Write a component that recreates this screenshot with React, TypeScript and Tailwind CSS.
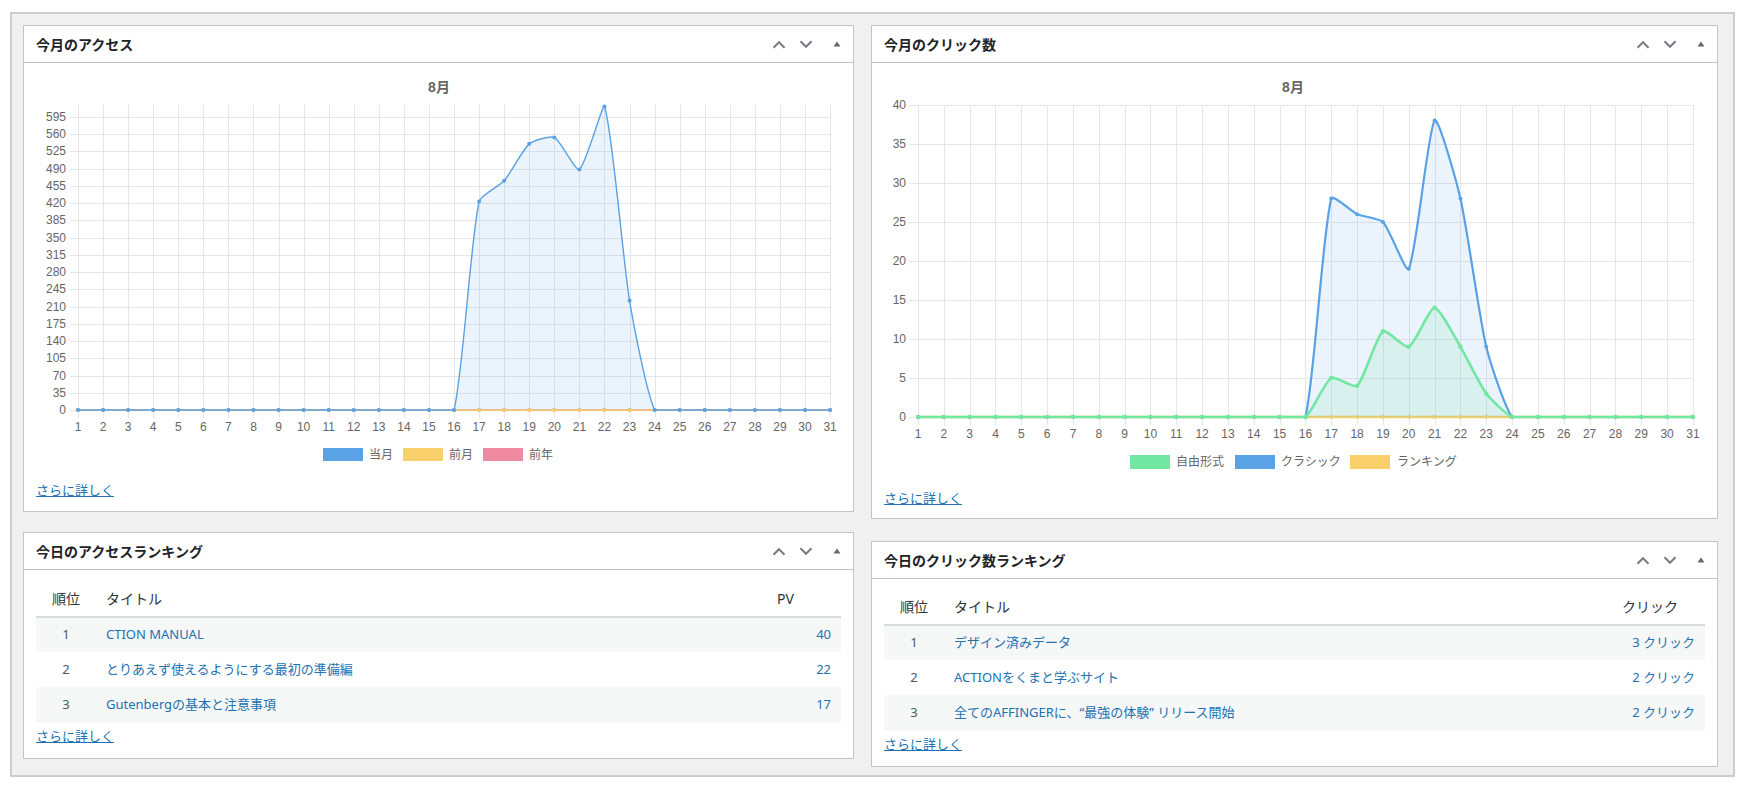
import React from 'react';

type Pt = { x: number; y: number };

type DataSet = {
  data: number[];
  color: string;
  fill?: string;
  width: number;
  r: number;
};

type ChartCfg = {
  vb: [number, number, number, number];
  titleX: number;
  titleY: number;
  x0: number;
  dx: number;
  y0: number;
  k: number;
  top: number;
  yTicks: number[];
  yLabelX: number;
  gridLeft: number;
  gridRight: number;
  gridBottom: number;
  xLabelY: number;
  sets: DataSet[]; // bottom first
  legend: { x: number; tx: number; label: string; color: string }[];
  legendY: number;
  legendH: number;
};

const zeros = (n: number) => Array.from({ length: n }, () => 0);

const withDays = (vals: Record<number, number>) =>
  Array.from({ length: 31 }, (_, i) => vals[i + 1] ?? 0);

// chart.js style spline, control points capped to the chart area
function splinePath(pts: Pt[], tension: number, top: number, bottom: number) {
  const cap = (y: number) => Math.min(bottom, Math.max(top, y));
  const cps = pts.map((cur, i) => {
    const prev = pts[i - 1] || cur;
    const next = pts[i + 1] || cur;
    const d01 = Math.hypot(cur.x - prev.x, cur.y - prev.y);
    const d12 = Math.hypot(next.x - cur.x, next.y - cur.y);
    let s01 = d01 / (d01 + d12);
    let s12 = d12 / (d01 + d12);
    if (isNaN(s01)) s01 = 0;
    if (isNaN(s12)) s12 = 0;
    const fa = tension * s01;
    const fb = tension * s12;
    return {
      p: { x: cur.x - fa * (next.x - prev.x), y: cap(cur.y - fa * (next.y - prev.y)) },
      n: { x: cur.x + fb * (next.x - prev.x), y: cap(cur.y + fb * (next.y - prev.y)) },
    };
  });
  let d = `M${pts[0].x},${pts[0].y}`;
  for (let i = 1; i < pts.length; i++) {
    const a = cps[i - 1].n;
    const b = cps[i].p;
    d += ` C${a.x},${a.y} ${b.x},${b.y} ${pts[i].x},${pts[i].y}`;
  }
  return d;
}

function LineChart({ c }: { c: ChartCfg }) {
  const days = Array.from({ length: 31 }, (_, i) => i + 1);
  const X = (d: number) => c.x0 + (d - 1) * c.dx;
  const Y = (v: number) => c.y0 - v * c.k;
  return (
    <svg
      width={c.vb[2]}
      height={c.vb[3]}
      viewBox={c.vb.join(' ')}
      className="block"
      fontFamily="'Liberation Sans','Noto Sans CJK JP',sans-serif"
    >
      <text x={c.titleX} y={c.titleY} textAnchor="middle" dominantBaseline="central" fontSize={14} fontWeight="bold" fill="#666">
        8月
      </text>

      {/* grid */}
      {c.yTicks.map((v) => (
        <line key={'h' + v} x1={c.gridLeft} x2={c.gridRight} y1={Math.round(Y(v)) + 0.5} y2={Math.round(Y(v)) + 0.5} stroke="#e6e6e6" />
      ))}
      {days.map((d) => (
        <line key={'v' + d} x1={Math.round(X(d)) + 0.5} x2={Math.round(X(d)) + 0.5} y1={c.top} y2={c.gridBottom} stroke="#e6e6e6" />
      ))}

      {/* axis labels */}
      {c.yTicks.map((v) => (
        <text key={'yl' + v} x={c.yLabelX} y={Y(v)} textAnchor="end" dominantBaseline="central" fontSize={12} fill="#666">
          {v}
        </text>
      ))}
      {days.map((d) => (
        <text key={'xl' + d} x={X(d)} y={c.xLabelY} textAnchor="middle" dominantBaseline="central" fontSize={12} fill="#666">
          {d}
        </text>
      ))}

      {/* datasets */}
      {c.sets.map((s, i) => {
        const pts = s.data.map((v, j) => ({ x: X(j + 1), y: Y(v) }));
        const line = splinePath(pts, 0.2, c.top, c.y0);
        return (
          <g key={'ds' + i}>
            {s.fill && <path d={`${line} L${pts[pts.length - 1].x},${c.y0} L${pts[0].x},${c.y0} Z`} fill={s.fill} />}
            <path d={line} fill="none" stroke={s.color} strokeWidth={s.width} />
            {pts.map((p, j) => (
              <circle key={j} cx={p.x} cy={p.y} r={s.r} fill={s.color} />
            ))}
          </g>
        );
      })}

      {/* legend */}
      {c.legend.map((l) => (
        <g key={l.label}>
          <rect x={l.x} y={c.legendY} width={40} height={c.legendH} fill={l.color} />
          <text x={l.tx} y={c.legendY + c.legendH / 2} dominantBaseline="central" fontSize={12} fill="#666">
            {l.label}
          </text>
        </g>
      ))}
    </svg>
  );
}

const BLUE = '#59a2e6';
const ORANGE = '#f8cf6b';
const PINK = '#f08aa0';
const GREEN = '#72e6a3';

const accessChart: ChartCfg = {
  vb: [24, 63, 829, 407],
  titleX: 439,
  titleY: 87,
  x0: 78,
  dx: 25.07,
  y0: 410,
  k: 17.25 / 35,
  top: 105,
  yTicks: Array.from({ length: 18 }, (_, i) => i * 35),
  yLabelX: 66,
  gridLeft: 70,
  gridRight: 831,
  gridBottom: 418,
  xLabelY: 427,
  sets: [
    { data: zeros(31), color: PINK, width: 1.4, r: 2 },
    { data: zeros(31), color: ORANGE, width: 1.4, r: 2 },
    {
      data: withDays({ 17: 423, 18: 465, 19: 540, 20: 553, 21: 488, 22: 616, 23: 222 }),
      color: BLUE,
      fill: 'rgba(90,162,230,0.12)',
      width: 1.4,
      r: 2,
    },
  ],
  legend: [
    { x: 323, tx: 369, label: '当月', color: BLUE },
    { x: 403, tx: 449, label: '前月', color: ORANGE },
    { x: 483, tx: 529, label: '前年', color: PINK },
  ],
  legendY: 448,
  legendH: 13,
};

const clickChart: ChartCfg = {
  vb: [872, 63, 845, 415],
  titleX: 1293,
  titleY: 87,
  x0: 918,
  dx: 25.83,
  y0: 417,
  k: 7.8,
  top: 105,
  yTicks: [0, 5, 10, 15, 20, 25, 30, 35, 40],
  yLabelX: 906,
  gridLeft: 909,
  gridRight: 1694,
  gridBottom: 425,
  xLabelY: 434,
  sets: [
    { data: zeros(31), color: ORANGE, width: 2.4, r: 2 },
    {
      data: withDays({ 17: 28, 18: 26, 19: 25, 20: 19, 21: 38, 22: 28, 23: 9 }),
      color: BLUE,
      fill: 'rgba(90,162,230,0.12)',
      width: 2.2,
      r: 2,
    },
    {
      data: withDays({ 17: 5, 18: 4, 19: 11, 20: 9, 21: 14, 22: 9, 23: 3 }),
      color: GREEN,
      fill: 'rgba(114,230,163,0.15)',
      width: 2.6,
      r: 2.2,
    },
  ],
  legend: [
    { x: 1130, tx: 1176, label: '自由形式', color: GREEN },
    { x: 1235, tx: 1281, label: 'クラシック', color: BLUE },
    { x: 1350, tx: 1397, label: 'ランキング', color: ORANGE },
  ],
  legendY: 455,
  legendH: 14,
};

function HandleActions() {
  return (
    <div className="flex h-full items-center">
      <button className="flex h-full w-[26px] items-center justify-center">
        <svg width="14" height="9" viewBox="0 0 14 9">
          <polyline points="1.5,7.8 7,2.2 12.5,7.8" fill="none" stroke="#787c82" strokeWidth="2" />
        </svg>
      </button>
      <button className="flex h-full w-[28px] items-center justify-center">
        <svg width="14" height="9" viewBox="0 0 14 9">
          <polyline points="1.5,1.2 7,6.8 12.5,1.2" fill="none" stroke="#787c82" strokeWidth="2" />
        </svg>
      </button>
      <button className="flex h-full w-[33px] items-center justify-center">
        <svg width="8" height="6" viewBox="0 0 8 6">
          <polygon points="0.5,5.5 4,0.5 7.5,5.5" fill="#646970" />
        </svg>
      </button>
    </div>
  );
}

function Panel({ title, className, children }: { title: string; className?: string; children: React.ReactNode }) {
  return (
    <div className={'border border-[#c3c4c7] bg-white ' + (className ?? '')}>
      <div className="flex h-[37px] items-center justify-between border-b border-[#c3c4c7] pl-[12px]">
        <h2 className="text-[14px] font-semibold text-[#1d2327]">{title}</h2>
        <HandleActions />
      </div>
      {children}
    </div>
  );
}

function MoreLink({ className }: { className?: string }) {
  return (
    <div className={'px-[12px] text-[13px] leading-[18px] ' + (className ?? '')}>
      <a href="#" className="text-[#2271b1] underline">
        さらに詳しく
      </a>
    </div>
  );
}

type Row = { rank: number; title: string; value: string };

function RankingTable({ valueHead, valueWidth, rows }: { valueHead: string; valueWidth: string; rows: Row[] }) {
  return (
    <table className="w-full table-fixed border-collapse">
      <colgroup>
        <col className="w-[60px]" />
        <col />
        <col className={valueWidth} />
      </colgroup>
      <thead>
        <tr className="h-[36px] border-b-2 border-[#dcdcde]">
          <th className="text-center text-[14px] font-normal text-[#2c3338]">順位</th>
          <th className="pl-[10px] text-left text-[14px] font-normal text-[#2c3338]">タイトル</th>
          <th className="pl-[10px] text-left text-[14px] font-normal text-[#2c3338]">{valueHead}</th>
        </tr>
      </thead>
      <tbody>
        {rows.map((r, i) => (
          <tr key={r.rank} className={'h-[35px] ' + (i % 2 === 0 ? 'bg-[#f6f7f7]' : 'bg-white')}>
            <td className="text-center text-[13px] text-[#50575e]">{r.rank}</td>
            <td className="truncate pl-[10px] text-[13px] text-[#2271b1]">{r.title}</td>
            <td className="pr-[10px] text-right text-[13px] text-[#2271b1]">{r.value}</td>
          </tr>
        ))}
      </tbody>
    </table>
  );
}

export default function App() {
  return (
    <div className="h-[792px] w-[1748px] bg-white pl-[10px] pt-[12px] font-['Noto_Sans','Noto_Sans_CJK_JP',sans-serif]">
      <div className="flex h-[765px] w-[1725px] gap-[17px] border-2 border-[#cccccc] bg-[#f0f0f1] pl-[11px] pt-[11px]">
        {/* left column */}
        <div className="flex w-[831px] flex-col">
          <Panel title="今月のアクセス" className="h-[487px]">
            <LineChart c={accessChart} />
            <MoreLink className="mt-[11px]" />
          </Panel>
          <Panel title="今日のアクセスランキング" className="mt-[20px] h-[227px]">
            <div className="px-[12px] pt-[11px]">
              <RankingTable
                valueHead="PV"
                valueWidth="w-[74px]"
                rows={[
                  { rank: 1, title: 'CTION MANUAL', value: '40' },
                  { rank: 2, title: 'とりあえず使えるようにする最初の準備編', value: '22' },
                  { rank: 3, title: 'Gutenbergの基本と注意事項', value: '17' },
                ]}
              />
            </div>
            <MoreLink className="mt-[5px]" />
          </Panel>
        </div>

        {/* right column */}
        <div className="flex w-[847px] flex-col">
          <Panel title="今月のクリック数" className="h-[494px]">
            <LineChart c={clickChart} />
            <MoreLink className="mt-[11px]" />
          </Panel>
          <Panel title="今日のクリック数ランキング" className="mt-[22px] h-[226px]">
            <div className="px-[12px] pt-[10px]">
              <RankingTable
                valueHead="クリック"
                valueWidth="w-[93px]"
                rows={[
                  { rank: 1, title: 'デザイン済みデータ', value: '3 クリック' },
                  { rank: 2, title: 'ACTIONをくまと学ぶサイト', value: '2 クリック' },
                  { rank: 3, title: '全てのAFFINGERに、“最強の体験” リリース開始', value: '2 クリック' },
                ]}
              />
            </div>
            <MoreLink className="mt-[5px]" />
          </Panel>
        </div>
      </div>
    </div>
  );
}
